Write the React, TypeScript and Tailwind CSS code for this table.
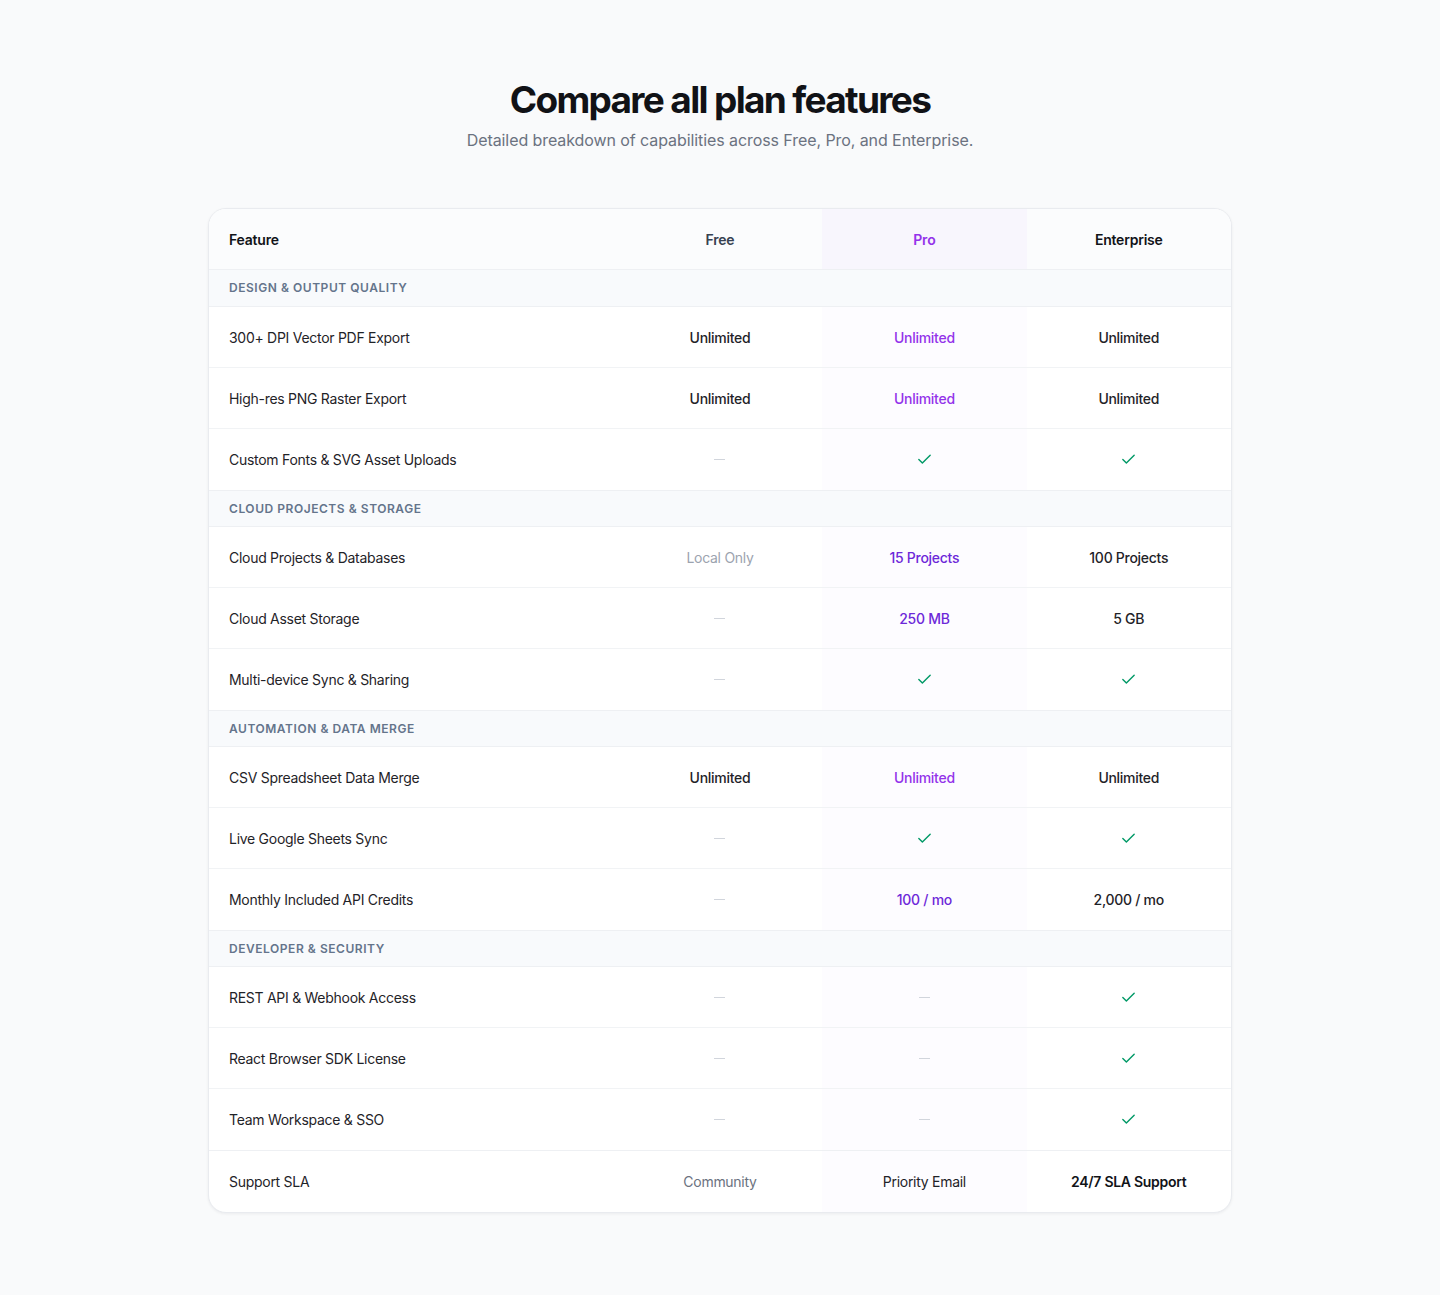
import { Check } from 'lucide-react'

type Cell = string | boolean

type Row = { name: string; free: Cell; pro: Cell; ent: Cell; proTone?: 'light' | 'dark' }

const sections: { title: string; rows: Row[] }[] = [
  {
    title: 'Design & Output Quality',
    rows: [
      { name: '300+ DPI Vector PDF Export', free: 'Unlimited', pro: 'Unlimited', ent: 'Unlimited', proTone: 'light' },
      { name: 'High-res PNG Raster Export', free: 'Unlimited', pro: 'Unlimited', ent: 'Unlimited', proTone: 'light' },
      { name: 'Custom Fonts & SVG Asset Uploads', free: false, pro: true, ent: true },
    ],
  },
  {
    title: 'Cloud Projects & Storage',
    rows: [
      { name: 'Cloud Projects & Databases', free: 'Local Only', pro: '15 Projects', ent: '100 Projects', proTone: 'dark' },
      { name: 'Cloud Asset Storage', free: false, pro: '250 MB', ent: '5 GB', proTone: 'dark' },
      { name: 'Multi-device Sync & Sharing', free: false, pro: true, ent: true },
    ],
  },
  {
    title: 'Automation & Data Merge',
    rows: [
      { name: 'CSV Spreadsheet Data Merge', free: 'Unlimited', pro: 'Unlimited', ent: 'Unlimited', proTone: 'light' },
      { name: 'Live Google Sheets Sync', free: false, pro: true, ent: true },
      { name: 'Monthly Included API Credits', free: false, pro: '100 / mo', ent: '2,000 / mo', proTone: 'dark' },
    ],
  },
  {
    title: 'Developer & Security',
    rows: [
      { name: 'REST API & Webhook Access', free: false, pro: false, ent: true },
      { name: 'React Browser SDK License', free: false, pro: false, ent: true },
      { name: 'Team Workspace & SSO', free: false, pro: false, ent: true },
    ],
  },
]

function Dash() {
  return <span className="block w-[11px] h-px bg-gray-300" />
}

function Tick() {
  return <Check className="w-[17px] h-[17px] text-emerald-600" strokeWidth={2} />
}

function Value({ v, className }: { v: Cell; className: string }) {
  if (v === true) return <Tick />
  if (v === false) return <Dash />
  return <span className={className}>{v}</span>
}

export default function App() {
  return (
    <div
      className="min-h-[1295px] bg-[#f9fafb] pt-[78px] pb-20 text-[#111318]"
      style={{ fontFamily: 'Inter, "Noto Sans", sans-serif' }}
    >
      <div className="text-center">
        <h1 className="text-[37px] leading-[44px] font-bold tracking-[-0.045em] text-[#111216]">
          Compare all plan features
        </h1>
        <p className="mt-[6px] text-[16px] leading-6 text-[#6b7280] tracking-[-0.005em]">
          Detailed breakdown of capabilities across Free, Pro, and Enterprise.
        </p>
      </div>

      <div className="mx-auto mt-[56px] w-[1024px] bg-white rounded-[18px] border border-[#e9ebef] shadow-[0_1px_3px_rgba(15,23,42,0.06)] overflow-hidden">
        <div className="grid grid-cols-[40%_20%_20%_20%] h-[61px] bg-[#fbfcfd] border-b border-[#eef0f3] text-[14px] font-semibold tracking-[-0.015em]">
          <div className="flex items-center pl-5">Feature</div>
          <div className="flex items-center justify-center text-[#374151]">Free</div>
          <div className="flex items-center justify-center bg-[#f8f6fd] text-[#9333ea]">Pro</div>
          <div className="flex items-center justify-center text-[#111318]">Enterprise</div>
        </div>

        {sections.map((s, si) => (
          <div key={s.title}>
            <div
              className={
                'h-[37px] flex items-center pl-5 bg-[#f8fafc] border-b border-[#eef0f3] text-[12px] font-semibold uppercase tracking-[0.045em] text-[#64748b]' +
                (si > 0 ? ' border-t' : '')
              }
            >
              {s.title}
            </div>
            {s.rows.map((r, ri) => (
              <div
                key={r.name}
                className={
                  'grid grid-cols-[40%_20%_20%_20%] h-[61px] text-[14px] tracking-[-0.02em]' +
                  (ri < s.rows.length - 1 ? ' border-b border-[#f1f3f5]' : '')
                }
              >
                <div className="flex items-center pl-5 text-[#1f2328]">{r.name}</div>
                <div className="flex items-center justify-center">
                  <Value
                    v={r.free}
                    className={r.free === 'Local Only' ? 'text-[#9ca3af]' : 'font-medium text-[#1f2328]'}
                  />
                </div>
                <div className="flex items-center justify-center bg-[#fdfcff]">
                  <Value
                    v={r.pro}
                    className={'font-medium ' + (r.proTone === 'light' ? 'text-[#9333ea]' : 'text-[#6d28d9]')}
                  />
                </div>
                <div className="flex items-center justify-center">
                  <Value v={r.ent} className="font-medium text-[#1f2328]" />
                </div>
              </div>
            ))}
          </div>
        ))}

        <div className="grid grid-cols-[40%_20%_20%_20%] h-[62px] text-[14px] tracking-[-0.02em] border-t border-[#eef0f3]">
          <div className="flex items-center pl-5 text-[#1f2328]">Support SLA</div>
          <div className="flex items-center justify-center text-[#6b7280]">Community</div>
          <div className="flex items-center justify-center bg-[#fdfcff] text-[#1f2328]">Priority Email</div>
          <div className="flex items-center justify-center font-semibold text-[#111318]">24/7 SLA Support</div>
        </div>
      </div>
    </div>
  )
}
